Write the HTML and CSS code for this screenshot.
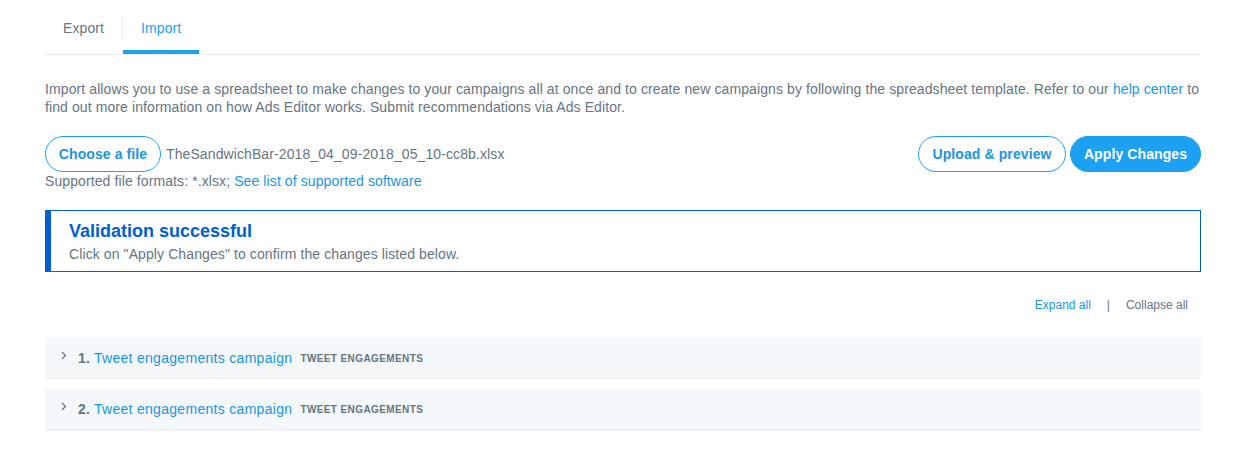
FILE: index.html
```html
<!DOCTYPE html>
<html>
<head>
<meta charset="utf-8">
<link rel="stylesheet" href="styles.css">
</head>
<body>
<div class="page">
  <div class="tabs">
    <div class="tab">Export</div>
    <div class="tab active">Import</div>
  </div>
  <p class="intro">Import allows you to use a spreadsheet to make changes to your campaigns all at once and to create new campaigns by following the spreadsheet template. Refer to our <a class="link">help center</a> to find out more information on how Ads Editor works. Submit recommendations via Ads Editor.</p>
  <div class="file-row">
    <div class="file-left">
      <button class="btn btn-outline choose">Choose a file</button>
      <span class="filename">TheSandwichBar-2018_04_09-2018_05_10-cc8b.xlsx</span>
    </div>
    <div class="file-actions">
      <button class="btn btn-outline upload">Upload &amp; preview</button>
      <button class="btn btn-primary apply">Apply Changes</button>
    </div>
  </div>
  <div class="formats">Supported file formats: *.xlsx; <a class="link">See list of supported software</a></div>
  <div class="alert">
    <div class="alert-title">Validation successful</div>
    <div class="alert-text">Click on "Apply Changes" to confirm the changes listed below.</div>
  </div>
  <div class="toggles">
    <a class="link">Expand all</a>
    <span class="sep">|</span>
    <span class="collapse">Collapse all</span>
  </div>
  <div class="campaigns">
    <div class="campaign">
      <svg class="chev" width="6" height="9" viewBox="0 0 6 9"><path d="M1 1l3.5 3.5L1 8" fill="none" stroke="#66757f" stroke-width="1.2"/></svg>
      <span class="num">1.</span>
      <a class="link name">Tweet engagements campaign</a>
      <span class="tag">TWEET ENGAGEMENTS</span>
    </div>
    <div class="campaign">
      <svg class="chev" width="6" height="9" viewBox="0 0 6 9"><path d="M1 1l3.5 3.5L1 8" fill="none" stroke="#66757f" stroke-width="1.2"/></svg>
      <span class="num">2.</span>
      <a class="link name">Tweet engagements campaign</a>
      <span class="tag">TWEET ENGAGEMENTS</span>
    </div>
  </div>
</div>
</body>
</html>
```

FILE: styles.css
```css
* { box-sizing: border-box; }
body {
  margin: 0;
  background: #fff;
  font-family: "Liberation Sans", Arial, sans-serif;
  color: #66757f;
  font-size: 14px;
  letter-spacing: 0.1px;
}
.page {
  width: 1156px;
  margin-left: 45px;
}
.tabs {
  display: flex;
  border-bottom: 1px solid #e6ecf0;
}
.tab {
  position: relative;
  padding: 19px 18px 13px;
  line-height: 18px;
  font-size: 14px;
  color: #66757f;
  border-bottom: 4px solid transparent;
}
.tab.active {
  color: #1da1f2;
  border-bottom-color: #1da1f2;
  margin-left: 1px;
}
.tab.active::before {
  content: "";
  position: absolute;
  left: -1px;
  top: 18px;
  height: 20px;
  width: 1px;
  background: #e6ecf0;
}
.intro {
  margin: 25px 0 0;
  line-height: 18px;
  font-size: 14px;
}
.link {
  color: #1b95e0;
  text-decoration: none;
}
.file-row {
  margin-top: 20px;
  display: flex;
  justify-content: space-between;
  align-items: center;
}
.file-left {
  display: flex;
  align-items: center;
  gap: 5px;
}
.file-actions {
  display: flex;
  gap: 4px;
}
.btn {
  height: 36px;
  border-radius: 18px;
  font-family: "Liberation Sans", Arial, sans-serif;
  font-weight: bold;
  font-size: 14px;
  letter-spacing: 0.1px;
  padding: 0;
  white-space: nowrap;
  cursor: pointer;
}
.btn-outline {
  background: #fff;
  border: 1px solid #1da1f2;
  color: #1b95e0;
}
.btn-primary {
  background: #1da1f2;
  border: 1px solid #1da1f2;
  color: #fff;
}
.choose { width: 116px; }
.upload { width: 148px; }
.apply { width: 131px; }
.filename {
  color: #66757f;
}
.formats {
  line-height: 18px;
}
.alert {
  margin-top: 20px;
  border: 1px solid #005fd1;
  border-left: 6px solid #005fd1;
  padding: 9px 18px 7px;
  height: 62px;
}
.alert-title {
  color: #005fd1;
  font-weight: bold;
  font-size: 18px;
  line-height: 22px;
  letter-spacing: 0;
}
.alert-text {
  margin-top: 3px;
  line-height: 18px;
}
.toggles {
  margin-top: 25px;
  display: flex;
  justify-content: flex-end;
  align-items: center;
  font-size: 12px;
  line-height: 16px;
  padding-right: 13px;
  letter-spacing: 0;
}
.sep {
  margin: 0 16px;
  color: #66757f;
}
.collapse { color: #66757f; }
.campaigns {
  margin-top: 25px;
  display: flex;
  flex-direction: column;
  gap: 10px;
}
.campaign {
  height: 41px;
  background: #f5f8fa;
  border-bottom: 1px solid #e6ecf0;
  display: flex;
  align-items: center;
  padding-left: 16px;
}
.chev {
  margin-top: -6px;
  margin-right: 11px;
}
.num {
  font-weight: bold;
  color: #66757f;
  margin-right: 4px;
  font-size: 14px;
}
.name {
  font-size: 14px;
  letter-spacing: 0.3px;
}
.tag {
  margin-left: 8px;
  font-size: 10px;
  font-weight: bold;
  letter-spacing: 0.4px;
  color: #66757f;
}
```
